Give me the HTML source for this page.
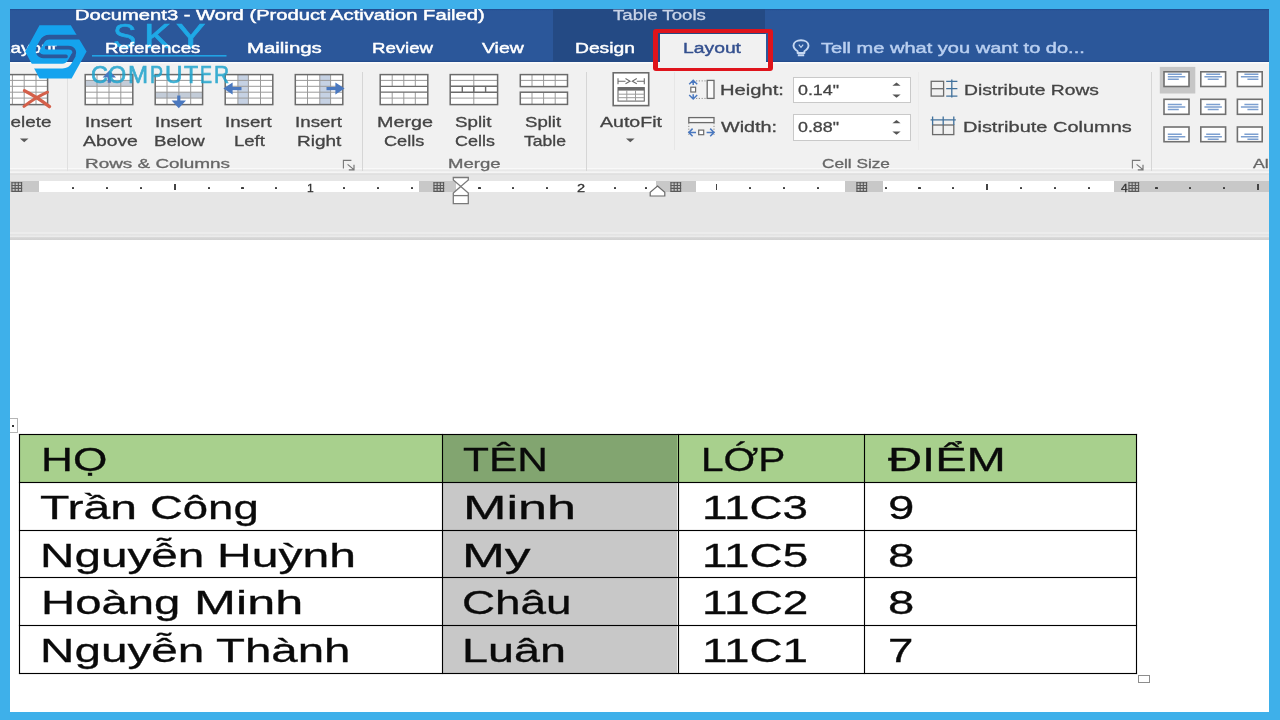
<!DOCTYPE html>
<html lang="vi"><head><meta charset="utf-8"><title>Word - Table Tools Layout</title>
<style>
html,body{margin:0;padding:0;}
body{width:1280px;height:720px;overflow:hidden;background:#3eb0ea;position:relative;font-family:'Liberation Sans',sans-serif;}
#win{position:absolute;left:0;top:0;width:1280px;height:720px;overflow:hidden;}
.a{position:absolute;}
.t{position:absolute;white-space:pre;line-height:1;transform-origin:0 0;font-family:'Liberation Sans',sans-serif;}
#titlebar{left:10px;top:9px;width:1260px;height:53px;background:linear-gradient(#214f93 0,#214f93 1px,#2b579a 1.6px,#2b579a 51.4px,#234c8d 51.8px,#234c8d 53px);}
#ctx{left:553px;top:9px;width:212px;height:53px;background:#244a84;}
#ctx2{left:553px;top:30px;width:107px;height:32px;background:#244a84;}
#seltab{left:660px;top:34px;width:106px;height:30px;background:#f1f1f1;}
#redbox{left:652.9px;top:29.3px;width:119.8px;height:41.6px;box-sizing:border-box;border:solid #df141c;border-width:4px 5.4px 3.7px 5.4px;border-radius:3px;}
#ribbon{left:10px;top:62px;width:1260px;height:113px;background:linear-gradient(#fbfbfb 0,#fbfbfb 1.2px,#f1f1f1 1.8px);}
#ribbonline{left:10px;top:167.7px;width:1260px;height:8.3px;background:linear-gradient(#f9f9f9 0,#f9f9f9 1.3px,#e8e8e8 1.6px,#e8e8e8 3.3px,#f5f5f5 3.6px,#f5f5f5 5.2px,#dddddd 5.6px,#e6e6e6 8.3px);}
#doc{left:10px;top:175px;width:1260px;height:65px;background:#e6e6e6;}
#docline{left:10px;top:232px;width:1260px;height:8px;background:linear-gradient(#ececec 0,#ececec 1.5px,#e3e3e3 1.8px,#e3e3e3 3.4px,#ebebeb 3.7px,#ebebeb 5px,#d6d6d6 5.6px,#d2d2d2 7.7px,#fff 8px);}
#page{left:10px;top:240px;width:1260px;height:472px;background:#fff;}
.sep{position:absolute;width:1px;background:#dadada;}
.fr{position:absolute;background:#3eb0ea;z-index:50;}
/* ruler */
#ruler{left:10px;top:181.2px;width:1260px;height:10.9px;background:#fff;}
.rg{position:absolute;top:180.6px;height:11.6px;background:#c8c8c8;}
.dot{position:absolute;top:186.9px;width:2.3px;height:2.3px;background:#3c3c3c;border-radius:0.6px;}
.tick{position:absolute;top:184px;width:1.5px;height:6.4px;background:#444;}
/* table */
.cell{position:absolute;}
.hl{position:absolute;height:1px;background:#000;left:19px;width:1118px;box-shadow:0 0 .9px rgba(0,0,0,.75);}
.vl{position:absolute;width:1px;background:#000;top:434px;height:240px;box-shadow:0 0 .9px rgba(0,0,0,.75);}
.inp{position:absolute;background:#fff;border:1px solid #c9c9c9;box-sizing:border-box;}
svg{position:absolute;overflow:visible;}

.op{opacity:.86;}

</style></head>
<body>
<div id="win">
<!-- title + tabs -->
<div class="a" id="titlebar"></div>
<div class="a" id="ctx"></div>
<!-- ribbon -->
<div class="a" id="ribbon"></div>
<div class="a" id="ribbonline"></div>
<div class="a" id="seltab"></div>
<div class="a" id="redbox"></div>
<!-- document area -->
<div class="a" id="doc"></div>
<div class="a" id="docline"></div>
<div class="a" id="ruler"></div>
<div class="rg" style="left:10px;width:28.5px"></div>
<div class="rg" style="left:419.4px;width:36.60000000000002px"></div>
<div class="rg" style="left:656px;width:40px"></div>
<div class="rg" style="left:845px;width:37.5px"></div>
<div class="rg" style="left:1114px;width:156px"></div>
<svg style="left:11.2px;top:181.8px" width="11.5" height="10" viewBox="0 0 11 10"><path d="M0 .7H11M0 3.5H11M0 6.4H11M0 9.3H11M.7 0V10M3.9 0V10M7.1 0V10M10.3 0V10" stroke="#5a5a5a" stroke-width="1.15" fill="none"/></svg>
<svg style="left:433px;top:181.8px" width="11.5" height="10" viewBox="0 0 11 10"><path d="M0 .7H11M0 3.5H11M0 6.4H11M0 9.3H11M.7 0V10M3.9 0V10M7.1 0V10M10.3 0V10" stroke="#5a5a5a" stroke-width="1.15" fill="none"/></svg>
<svg style="left:670px;top:181.8px" width="11.5" height="10" viewBox="0 0 11 10"><path d="M0 .7H11M0 3.5H11M0 6.4H11M0 9.3H11M.7 0V10M3.9 0V10M7.1 0V10M10.3 0V10" stroke="#5a5a5a" stroke-width="1.15" fill="none"/></svg>
<svg style="left:856px;top:181.8px" width="11.5" height="10" viewBox="0 0 11 10"><path d="M0 .7H11M0 3.5H11M0 6.4H11M0 9.3H11M.7 0V10M3.9 0V10M7.1 0V10M10.3 0V10" stroke="#5a5a5a" stroke-width="1.15" fill="none"/></svg>
<svg style="left:1128px;top:181.8px" width="11.5" height="10" viewBox="0 0 11 10"><path d="M0 .7H11M0 3.5H11M0 6.4H11M0 9.3H11M.7 0V10M3.9 0V10M7.1 0V10M10.3 0V10" stroke="#5a5a5a" stroke-width="1.15" fill="none"/></svg>
<div class="dot" style="left:72.2px"></div>
<div class="dot" style="left:106.0px"></div>
<div class="dot" style="left:139.9px"></div>
<div class="tick" style="left:174.0px"></div>
<div class="dot" style="left:207.6px"></div>
<div class="dot" style="left:241.4px"></div>
<div class="dot" style="left:275.2px"></div>
<div class="dot" style="left:343.0px"></div>
<div class="dot" style="left:376.8px"></div>
<div class="dot" style="left:410.7px"></div>
<div class="dot" style="left:478.4px"></div>
<div class="dot" style="left:512.2px"></div>
<div class="dot" style="left:546.0px"></div>
<div class="dot" style="left:613.8px"></div>
<div class="tick" style="left:715.6px"></div>
<div class="dot" style="left:749.1px"></div>
<div class="dot" style="left:783.0px"></div>
<div class="dot" style="left:816.9px"></div>
<div class="dot" style="left:884.5px"></div>
<div class="dot" style="left:918.4px"></div>
<div class="dot" style="left:952.2px"></div>
<div class="tick" style="left:986.4px"></div>
<div class="dot" style="left:1020.0px"></div>
<div class="dot" style="left:1053.8px"></div>
<div class="dot" style="left:1087.7px"></div>
<div class="dot" style="left:1155.3px"></div>
<div class="dot" style="left:1189.2px"></div>
<div class="dot" style="left:1223.0px"></div>
<div class="tick" style="left:1257.2px"></div>
<div class="dot" style="left:644.6px"></div>
<svg style="left:451.5px;top:177px" width="18" height="28" viewBox="0 0 18 28"><path d="M1.3 .5H16.3V3L8.8 9.4L1.3 3Z" fill="#fff" stroke="#7a7a7a" stroke-width="1.3"/><path d="M8.8 9.4L16.3 16V26.7H1.3V16Z" fill="#fff" stroke="#7a7a7a" stroke-width="1.3"/><path d="M1.3 18.6H16.3" stroke="#7a7a7a" stroke-width="1.3"/></svg>
<svg style="left:648.5px;top:184.5px" width="17" height="12" viewBox="0 0 17 12"><path d="M8.5 1L15.8 7.2V11H1.2V7.2Z" fill="#fff" stroke="#6a6a6a" stroke-width="1.2"/></svg>
<div class="a" id="page"></div>
<div class="cell" style="left:19.3px;top:434.6px;width:1117.2px;height:47.69999999999999px;background:#a8d08d"></div>
<div class="cell" style="left:442.5px;top:434.6px;width:234.79999999999995px;height:47.69999999999999px;background:#82a570"></div>
<div class="cell" style="left:442.5px;top:482.3px;width:234.79999999999995px;height:190.90000000000003px;background:#c8c8c8"></div>
<div class="hl" style="top:434px"></div>
<div class="hl" style="top:482px"></div>
<div class="hl" style="top:530px"></div>
<div class="hl" style="top:577px"></div>
<div class="hl" style="top:625px"></div>
<div class="hl" style="top:673px"></div>
<div class="vl" style="left:19px"></div>
<div class="vl" style="left:442px"></div>
<div class="vl" style="left:678px"></div>
<div class="vl" style="left:864px"></div>
<div class="vl" style="left:1136px"></div>
<div class="a" style="left:9px;top:418.4px;width:8.8px;height:15px;border:1px solid #b5b5b5;border-left:none;background:#fff;box-sizing:border-box"></div>
<div class="a" style="left:11.8px;top:425px;width:2px;height:2px;background:#333"></div>
<div class="a" style="left:1138px;top:674.7px;width:12px;height:8.6px;border:1px solid #8d8d8d;background:#fff;box-sizing:border-box"></div>
<div class="sep" style="left:67.3px;top:72px;height:99px;background:#e0e0e0"></div>
<div class="sep" style="left:362.2px;top:72px;height:99px;background:#d6d6d6"></div>
<div class="sep" style="left:585.9px;top:72px;height:99px;background:#d6d6d6"></div>
<div class="sep" style="left:674.3px;top:72px;height:78px;background:#e6e6e6"></div>
<div class="sep" style="left:918.3px;top:72px;height:78px;background:#ebebeb"></div>
<div class="sep" style="left:1150.9px;top:72px;height:99px;background:#d6d6d6"></div>
<div class="inp" style="left:792.6px;top:76.6px;width:118px;height:26.8px"></div>
<div class="inp" style="left:792.6px;top:113.6px;width:118px;height:27px"></div><svg style="left:0;top:0" width="1280" height="720" viewBox="0 0 1280 720"><rect x="0.5" y="74.6" width="47.10" height="30.00" fill="#fff"/><path d="M12.4 74.6V104.6M24.2 74.6V104.6M36 74.6V104.6M0.5 80.4H47.6M0.5 86.3H47.6M0.5 92.2H47.6M0.5 98.1H47.6" stroke="#9a9a9a" stroke-width="1.0" fill="none"/><rect x="0.5" y="74.6" width="47.10" height="30.00" fill="none" stroke="#6b6b6b" stroke-width="1.5"/>
<path d="M24.5 90.8C31 94 42 101 49.5 106.6" stroke="#d4604a" stroke-width="3.4" stroke-linecap="round" fill="none"/><path d="M47.5 92.2C40 95.5 31 101 24 106.4" stroke="#d4604a" stroke-width="3.0" stroke-linecap="round" fill="none"/>
<rect x="85.2" y="74.6" width="47.60" height="30.00" fill="#fff"/><rect x="85.2" y="80.4" width="47.6" height="5.9" fill="#c3ccd8"/><path d="M97 74.6V104.6M109 74.6V104.6M120.8 74.6V104.6M85.2 80.4H132.8M85.2 86.3H132.8M85.2 92.2H132.8M85.2 98.1H132.8" stroke="#9a9a9a" stroke-width="1.0" fill="none"/><rect x="85.2" y="74.6" width="47.60" height="30.00" fill="none" stroke="#6b6b6b" stroke-width="1.5"/>
<path d="M109.3 82.8V74.5" stroke="#4a78bf" stroke-width="3.2" fill="none"/><path d="M102.6 77.6L109.3 70.6L116 77.6Z" fill="#4a78bf"/>
<rect x="155.2" y="74.6" width="47.40" height="30.00" fill="#fff"/><rect x="155.2" y="92.2" width="47.4" height="5.9" fill="#c3ccd8"/><path d="M167 74.6V104.6M178.9 74.6V104.6M190.7 74.6V104.6M155.2 80.4H202.6M155.2 86.3H202.6M155.2 92.2H202.6M155.2 98.1H202.6" stroke="#9a9a9a" stroke-width="1.0" fill="none"/><rect x="155.2" y="74.6" width="47.40" height="30.00" fill="none" stroke="#6b6b6b" stroke-width="1.5"/>
<path d="M178.8 95.5V103.5" stroke="#4a78bf" stroke-width="3.2" fill="none"/><path d="M171.6 100.6L178.8 108.2L186 100.6Z" fill="#4a78bf"/>
<rect x="225.2" y="74.6" width="47.60" height="30.00" fill="#fff"/><rect x="237.9" y="74.6" width="10.5" height="30.0" fill="#c6d2e4"/><path d="M237.9 74.6V104.6M248.4 74.6V104.6M260.5 74.6V104.6M225.2 80.4H272.8M225.2 86.3H272.8M225.2 92.2H272.8M225.2 98.1H272.8" stroke="#9a9a9a" stroke-width="1.0" fill="none"/><rect x="225.2" y="74.6" width="47.60" height="30.00" fill="none" stroke="#6b6b6b" stroke-width="1.5"/>
<path d="M241.5 88.6H231" stroke="#4a78bf" stroke-width="3.2" fill="none"/><path d="M232.6 82.6L223.4 88.6L232.6 94.6Z" fill="#4a78bf"/>
<rect x="295.3" y="74.6" width="47.50" height="30.00" fill="#fff"/><rect x="319.8" y="74.6" width="10.8" height="30.0" fill="#c6d2e4"/><path d="M307.5 74.6V104.6M319.8 74.6V104.6M330.6 74.6V104.6M295.3 80.4H342.8M295.3 86.3H342.8M295.3 92.2H342.8M295.3 98.1H342.8" stroke="#9a9a9a" stroke-width="1.0" fill="none"/><rect x="295.3" y="74.6" width="47.50" height="30.00" fill="none" stroke="#6b6b6b" stroke-width="1.5"/>
<path d="M326.5 88.6H337" stroke="#4a78bf" stroke-width="3.2" fill="none"/><path d="M335.4 82.6L344.6 88.6L335.4 94.6Z" fill="#4a78bf"/>
<rect x="380.2" y="74.6" width="47.6" height="30.0" fill="#fff"/><path d="M392.2 74.6V86.3M392.2 92.2V104.6M403.8 74.6V86.3M403.8 92.2V104.6M415.3 74.6V86.3M415.3 92.2V104.6M380.2 80.4H427.8M380.2 98.1H427.8" stroke="#9a9a9a" stroke-width="1" fill="none"/><path d="M380.2 86.3H427.8M380.2 92.2H427.8" stroke="#6b6b6b" stroke-width="1.3" fill="none"/><rect x="380.2" y="74.6" width="47.6" height="30.0" fill="none" stroke="#6b6b6b" stroke-width="1.5"/>
<rect x="450.2" y="74.6" width="47.4" height="30.0" fill="#fff"/><path d="M473.8 74.6V104.6M450.2 80.4H497.6M450.2 98.1H497.6" stroke="#9a9a9a" stroke-width="1" fill="none"/><path d="M450.2 86.3H497.6M450.2 92.2H497.6M462.3 86.3V92.2M485.6 86.3V92.2M473.8 86.3V92.2" stroke="#6b6b6b" stroke-width="1.4" fill="none"/><rect x="450.2" y="74.6" width="47.4" height="30.0" fill="none" stroke="#6b6b6b" stroke-width="1.5"/>
<rect x="520.3" y="74.6" width="47.20" height="12.00" fill="#fff"/><path d="M532 74.6V86.6M543.6 74.6V86.6M555.2 74.6V86.6M520.3 80.4H567.5" stroke="#9a9a9a" stroke-width="1.0" fill="none"/><rect x="520.3" y="74.6" width="47.20" height="12.00" fill="none" stroke="#6b6b6b" stroke-width="1.5"/>
<rect x="520.3" y="92.2" width="47.20" height="12.20" fill="#fff"/><path d="M532 92.2V104.4M543.6 92.2V104.4M555.2 92.2V104.4M520.3 98.1H567.5" stroke="#9a9a9a" stroke-width="1.0" fill="none"/><rect x="520.3" y="92.2" width="47.20" height="12.20" fill="none" stroke="#6b6b6b" stroke-width="1.5"/>
<rect x="613.2" y="72.8" width="35.5" height="32.8" fill="#fff" stroke="#6b6b6b" stroke-width="1.6"/><path d="M618 78.2V84.2M644.3 78.2V84.2M618 81.2H625.5M636.8 81.2H644.3M625.5 78.6L630 81.2L625.5 83.8M636.8 78.6L632.3 81.2L636.8 83.8" stroke="#6b6b6b" stroke-width="1.1" fill="none"/><rect x="618" y="87.6" width="26.3" height="13.5" fill="#fff" stroke="#6b6b6b" stroke-width="1.1"/><rect x="618" y="87.6" width="26.3" height="3" fill="#6b6b6b"/><path d="M626.8 90V101M635.5 90V101M618 94.2H644.3M618 97.7H644.3" stroke="#9a9a9a" stroke-width="1" fill="none"/>
<path d="M19.9 138.6H28.5L24.2 142.2Z" fill="#5a5a5a"/>
<path d="M626.0 138.6H634.5999999999999L630.3 142.2Z" fill="#5a5a5a"/>
<rect x="707.2" y="80.4" width="6.8" height="18" fill="#fafafa" stroke="#6b6b6b" stroke-width="1.3"/><path d="M696 80.9H707M696 98.4H707" stroke="#8c8c8c" stroke-width="1" stroke-dasharray="1.2 1.6" fill="none"/><rect x="690.8" y="87.2" width="4.8" height="4.8" fill="#fff" stroke="#6b6b6b" stroke-width="1.2"/><path d="M689.2 84.2L693.2 80.2L697.2 84.2M693.2 80.6V85" stroke="#4a78bf" stroke-width="1.5" fill="none"/><path d="M689.2 95L693.2 99L697.2 95M693.2 98.6V94.2" stroke="#4a78bf" stroke-width="1.5" fill="none"/>
<rect x="688.8" y="117.6" width="25.2" height="5" fill="#fafafa" stroke="#6b6b6b" stroke-width="1.3"/><path d="M688.8 123V135M714 123V135" stroke="#8c8c8c" stroke-width="1" stroke-dasharray="1.2 1.6" fill="none"/><rect x="698.7" y="130.1" width="5" height="4.6" fill="#fff" stroke="#6b6b6b" stroke-width="1.2"/><path d="M692.6 128.6L688.8 132.4L692.6 136.2M689.2 132.4H696" stroke="#4a78bf" stroke-width="1.5" fill="none"/><path d="M710.2 128.6L714 132.4L710.2 136.2M713.6 132.4H706.6" stroke="#4a78bf" stroke-width="1.5" fill="none"/>
<path d="M892.4 85.8L896.5 82.6L900.6 85.8Z" fill="#555"/><path d="M892.4 94.6L896.5 97.8L900.6 94.6Z" fill="#555"/>
<path d="M892.4 123.2L896.5 120L900.6 123.2Z" fill="#555"/><path d="M892.4 131.60000000000002L896.5 134.8L900.6 131.60000000000002Z" fill="#555"/>
<rect x="931.2" y="81.3" width="12.4" height="14.8" fill="none" stroke="#6b6b6b" stroke-width="1.3"/><path d="M931.2 88.7H943.6" stroke="#6b6b6b" stroke-width="1.3"/><path d="M951.8 79.6V97.6M946.2 81.3H957.4M946.2 88.7H957.4M946.2 96.1H957.4" stroke="#41719c" stroke-width="1.3" fill="none"/>
<rect x="932.6" y="125" width="21.2" height="9.6" fill="none" stroke="#6b6b6b" stroke-width="1.3"/><path d="M943.2 125V134.6" stroke="#6b6b6b" stroke-width="1.3"/><path d="M930.6 119.8H955.8M932.6 116.6V125M943.2 116.6V125M953.8 116.6V125" stroke="#41719c" stroke-width="1.3" fill="none"/>
<path d="M351.4 160.4H343.4V168.4" stroke="#777" stroke-width="1.1" fill="none"/><path d="M347.59999999999997 164.4L353.59999999999997 169.4M354.0 164.8V169.8H348.79999999999995" stroke="#777" stroke-width="1.2" fill="none"/>
<path d="M1140.4 160.4H1132.4V168.4" stroke="#777" stroke-width="1.1" fill="none"/><path d="M1136.6000000000001 164.4L1142.6000000000001 169.4M1143.0 164.8V169.8H1137.8000000000002" stroke="#777" stroke-width="1.2" fill="none"/>
<rect x="1159.8" y="66.9" width="35.5" height="26.6" fill="#c6c6c6"/>
<rect x="1164" y="71.8" width="25.0" height="14.7" fill="#fff" stroke="#707070" stroke-width="1.6"/><path d="M1167.8 74.3h14M1167.8 76.8h17.5M1167.8 79.3h11" stroke="#7c9fd0" stroke-width="1.45" fill="none"/>
<rect x="1200.8" y="71.8" width="24.8" height="14.7" fill="#fff" stroke="#707070" stroke-width="1.6"/><path d="M1206.2 74.3h14M1204.4 76.8h17.5M1207.7 79.3h11" stroke="#7c9fd0" stroke-width="1.45" fill="none"/>
<rect x="1237.4" y="71.8" width="24.8" height="14.7" fill="#fff" stroke="#707070" stroke-width="1.6"/><path d="M1244.4 74.3h14M1240.9 76.8h17.5M1247.4 79.3h11" stroke="#7c9fd0" stroke-width="1.45" fill="none"/>
<rect x="1164" y="99.3" width="25.0" height="15.0" fill="#fff" stroke="#707070" stroke-width="1.6"/><path d="M1167.8 104.5h14M1167.8 107.0h17.5M1167.8 109.5h11" stroke="#7c9fd0" stroke-width="1.45" fill="none"/>
<rect x="1200.8" y="99.3" width="24.8" height="15.0" fill="#fff" stroke="#707070" stroke-width="1.6"/><path d="M1206.2 104.5h14M1204.4 107.0h17.5M1207.7 109.5h11" stroke="#7c9fd0" stroke-width="1.45" fill="none"/>
<rect x="1237.4" y="99.3" width="24.8" height="15.0" fill="#fff" stroke="#707070" stroke-width="1.6"/><path d="M1244.4 104.5h14M1240.9 107.0h17.5M1247.4 109.5h11" stroke="#7c9fd0" stroke-width="1.45" fill="none"/>
<rect x="1164" y="127" width="25.0" height="14.7" fill="#fff" stroke="#707070" stroke-width="1.6"/><path d="M1167.8 134.2h14M1167.8 136.7h17.5M1167.8 139.2h11" stroke="#7c9fd0" stroke-width="1.45" fill="none"/>
<rect x="1200.8" y="127" width="24.8" height="14.7" fill="#fff" stroke="#707070" stroke-width="1.6"/><path d="M1206.2 134.2h14M1204.4 136.7h17.5M1207.7 139.2h11" stroke="#7c9fd0" stroke-width="1.45" fill="none"/>
<rect x="1237.4" y="127" width="24.8" height="14.7" fill="#fff" stroke="#707070" stroke-width="1.6"/><path d="M1244.4 134.2h14M1240.9 136.7h17.5M1247.4 139.2h11" stroke="#7c9fd0" stroke-width="1.45" fill="none"/>
<path d="M797.6 51.2C794.8 49.6 793.5 47.8 793.5 45.6C793.5 42.4 796.8 40.3 801 40.3C805.2 40.3 808.5 42.4 808.5 45.6C808.5 47.8 807.2 49.6 804.4 51.2V53H797.6ZM797.8 55.3H804.2" stroke="#c6d8f2" stroke-width="1.9" fill="none" stroke-linejoin="round"/><path d="M798.8 44.6L801 47.4L803.2 44.6" stroke="#c6d8f2" stroke-width="1.1" fill="none"/></svg>
<div class="t" id="t0" style="left:112.70px;top:19.00px;font-size:34.36px;color:#1fa9e6;transform:scaleX(1.0209);-webkit-text-stroke:0.7px #1fa9e6">S</div>
<div class="t" id="t1" style="left:143.87px;top:19.00px;font-size:34.36px;color:#1fa9e6;transform:scaleX(1.1860);-webkit-text-stroke:0.7px #1fa9e6">K</div>
<div class="t" id="t2" style="left:176.41px;top:19.00px;font-size:34.36px;color:#1fa9e6;transform:scaleX(1.2887);-webkit-text-stroke:0.7px #1fa9e6">Y</div>
<div class="t op" id="t3" style="left:91.02px;top:64.00px;font-size:23.74px;color:#1ea3cc;transform:scaleX(0.9899);-webkit-text-stroke:0.7px #1ea3cc">C</div>
<div class="t op" id="t4" style="left:108.37px;top:64.00px;font-size:23.74px;color:#1ea3cc;transform:scaleX(0.9835);-webkit-text-stroke:0.7px #1ea3cc">O</div>
<div class="t op" id="t5" style="left:128.38px;top:64.00px;font-size:23.74px;color:#1ea3cc;transform:scaleX(1.0149);-webkit-text-stroke:0.7px #1ea3cc">M</div>
<div class="t op" id="t6" style="left:150.43px;top:64.00px;font-size:23.74px;color:#1ea3cc;transform:scaleX(0.8250);-webkit-text-stroke:0.7px #1ea3cc">P</div>
<div class="t op" id="t7" style="left:165.25px;top:64.00px;font-size:23.74px;color:#1ea3cc;transform:scaleX(1.0234);-webkit-text-stroke:0.7px #1ea3cc">U</div>
<div class="t op" id="t8" style="left:183.88px;top:64.00px;font-size:23.74px;color:#1ea3cc;transform:scaleX(0.9776);-webkit-text-stroke:0.7px #1ea3cc">T</div>
<div class="t op" id="t9" style="left:200.21px;top:64.00px;font-size:23.74px;color:#1ea3cc;transform:scaleX(0.7581);-webkit-text-stroke:0.7px #1ea3cc">E</div>
<div class="t op" id="t10" style="left:214.42px;top:64.00px;font-size:23.74px;color:#1ea3cc;transform:scaleX(0.8830);-webkit-text-stroke:0.7px #1ea3cc">R</div>
<div class="t" id="t11" style="left:75.41px;top:8.00px;font-size:14.39px;color:#fff;transform:scaleX(1.4025);-webkit-text-stroke:0.45px #fff">Document3 - Word (Product Activation Failed)</div>
<div class="t" id="t12" style="left:613.06px;top:8.00px;font-size:14.39px;color:#c9d4e8;transform:scaleX(1.2956);-webkit-text-stroke:0.3px #c9d4e8">Table Tools</div>
<div class="t" id="t13" style="left:-0.50px;top:40.00px;font-size:15.36px;color:#fff;transform:scaleX(1.2336);-webkit-text-stroke:0.45px #fff">Layout</div>
<div class="t" id="t14" style="left:104.64px;top:40.00px;font-size:15.36px;color:#fff;transform:scaleX(1.2140);-webkit-text-stroke:0.45px #fff">References</div>
<div class="t" id="t15" style="left:247.45px;top:40.00px;font-size:15.36px;color:#fff;transform:scaleX(1.3268);-webkit-text-stroke:0.45px #fff">Mailings</div>
<div class="t" id="t16" style="left:371.65px;top:40.00px;font-size:15.36px;color:#fff;transform:scaleX(1.2109);-webkit-text-stroke:0.45px #fff">Review</div>
<div class="t" id="t17" style="left:481.63px;top:40.00px;font-size:15.36px;color:#fff;transform:scaleX(1.2665);-webkit-text-stroke:0.45px #fff">View</div>
<div class="t" id="t18" style="left:574.59px;top:40.00px;font-size:15.36px;color:#fff;transform:scaleX(1.2539);-webkit-text-stroke:0.45px #fff">Design</div>
<div class="t" id="t19" style="left:683.00px;top:40.00px;font-size:15.36px;color:#34508f;transform:scaleX(1.2575);-webkit-text-stroke:0.4px #34508f">Layout</div>
<div class="t" id="t20" style="left:820.95px;top:40.00px;font-size:15.36px;color:#b9cff0;transform:scaleX(1.3038);-webkit-text-stroke:0.45px #b9cff0">Tell me what you want to do...</div>
<div class="t" id="t21" style="left:-3.00px;top:115.00px;font-size:14.8px;color:#444;transform:scaleX(1.2716);-webkit-text-stroke:0.3px #444">Delete</div>
<div class="t" id="t22" style="left:85.20px;top:115.00px;font-size:14.8px;color:#444;transform:scaleX(1.2679);-webkit-text-stroke:0.3px #444">Insert</div>
<div class="t" id="t23" style="left:83.22px;top:134.00px;font-size:14.8px;color:#444;transform:scaleX(1.3081);-webkit-text-stroke:0.3px #444">Above</div>
<div class="t" id="t24" style="left:155.24px;top:115.00px;font-size:14.8px;color:#444;transform:scaleX(1.2635);-webkit-text-stroke:0.3px #444">Insert</div>
<div class="t" id="t25" style="left:154.04px;top:134.00px;font-size:14.8px;color:#444;transform:scaleX(1.2611);-webkit-text-stroke:0.3px #444">Below</div>
<div class="t" id="t26" style="left:225.24px;top:115.00px;font-size:14.8px;color:#444;transform:scaleX(1.2635);-webkit-text-stroke:0.3px #444">Insert</div>
<div class="t" id="t27" style="left:234.04px;top:134.00px;font-size:14.8px;color:#444;transform:scaleX(1.2528);-webkit-text-stroke:0.3px #444">Left</div>
<div class="t" id="t28" style="left:295.20px;top:115.00px;font-size:14.8px;color:#444;transform:scaleX(1.2679);-webkit-text-stroke:0.3px #444">Insert</div>
<div class="t" id="t29" style="left:297.04px;top:134.00px;font-size:14.8px;color:#444;transform:scaleX(1.2841);-webkit-text-stroke:0.3px #444">Right</div>
<div class="t" id="t30" style="left:376.98px;top:115.00px;font-size:14.8px;color:#444;transform:scaleX(1.3335);-webkit-text-stroke:0.3px #444">Merge</div>
<div class="t" id="t31" style="left:383.69px;top:134.00px;font-size:14.8px;color:#444;transform:scaleX(1.2262);-webkit-text-stroke:0.3px #444">Cells</div>
<div class="t" id="t32" style="left:455.42px;top:115.00px;font-size:14.8px;color:#444;transform:scaleX(1.2680);-webkit-text-stroke:0.3px #444">Split</div>
<div class="t" id="t33" style="left:454.69px;top:134.00px;font-size:14.8px;color:#444;transform:scaleX(1.2120);-webkit-text-stroke:0.3px #444">Cells</div>
<div class="t" id="t34" style="left:525.45px;top:115.00px;font-size:14.8px;color:#444;transform:scaleX(1.2565);-webkit-text-stroke:0.3px #444">Split</div>
<div class="t" id="t35" style="left:524.11px;top:134.00px;font-size:14.8px;color:#444;transform:scaleX(1.1858);-webkit-text-stroke:0.3px #444">Table</div>
<div class="t" id="t36" style="left:600.22px;top:115.00px;font-size:14.8px;color:#444;transform:scaleX(1.3206);-webkit-text-stroke:0.3px #444">AutoFit</div>
<div class="t" id="t37" style="left:720.15px;top:83.00px;font-size:14.94px;color:#444;transform:scaleX(1.3502);-webkit-text-stroke:0.3px #444">Height:</div>
<div class="t" id="t38" style="left:721.24px;top:120.00px;font-size:14.94px;color:#444;transform:scaleX(1.3251);-webkit-text-stroke:0.3px #444">Width:</div>
<div class="t" id="t39" style="left:798.17px;top:83.00px;font-size:14.8px;color:#444;transform:scaleX(1.2051);-webkit-text-stroke:0.3px #444">0.14&quot;</div>
<div class="t" id="t40" style="left:798.17px;top:120.00px;font-size:14.8px;color:#444;transform:scaleX(1.2051);-webkit-text-stroke:0.3px #444">0.88&quot;</div>
<div class="t" id="t41" style="left:964.04px;top:83.00px;font-size:14.94px;color:#444;transform:scaleX(1.2904);-webkit-text-stroke:0.3px #444">Distribute Rows</div>
<div class="t" id="t42" style="left:963.42px;top:120.00px;font-size:14.94px;color:#444;transform:scaleX(1.3383);-webkit-text-stroke:0.3px #444">Distribute Columns</div>
<div class="t" id="t43" style="left:85.48px;top:158.00px;font-size:12.85px;color:#666;transform:scaleX(1.4722);-webkit-text-stroke:0.3px #666">Rows &amp; Columns</div>
<div class="t" id="t44" style="left:447.67px;top:158.00px;font-size:12.85px;color:#666;transform:scaleX(1.4429);-webkit-text-stroke:0.3px #666">Merge</div>
<div class="t" id="t45" style="left:821.74px;top:158.00px;font-size:12.85px;color:#666;transform:scaleX(1.3401);-webkit-text-stroke:0.3px #666">Cell Size</div>
<div class="t" id="t46" style="left:1253.40px;top:158.00px;font-size:12.85px;color:#666;transform:scaleX(1.3829);-webkit-text-stroke:0.3px #666">Alignment</div>
<div class="t" id="t47" style="left:307.44px;top:182.00px;font-size:11.73px;color:#333;transform:scaleX(1.0309);-webkit-text-stroke:0.3px #333">1</div>
<div class="t" id="t48" style="left:576.52px;top:182.00px;font-size:11.73px;color:#333;transform:scaleX(1.2453);-webkit-text-stroke:0.3px #333">2</div>
<div class="t" id="t49" style="left:1120.90px;top:182.00px;font-size:11.73px;color:#333;transform:scaleX(1.0273);-webkit-text-stroke:0.3px #333">4</div>
<div class="t" id="t50" style="left:41.17px;top:444.00px;font-size:32.82px;color:#0a0a0a;transform:scaleX(1.3464);-webkit-text-stroke:0.3px #0a0a0a">HỌ</div>
<div class="t" id="t51" style="left:39.94px;top:492.00px;font-size:32.82px;color:#0a0a0a;transform:scaleX(1.4651);-webkit-text-stroke:0.3px #0a0a0a">Trần</div>
<div class="t" id="t52" style="left:149.58px;top:492.00px;font-size:32.82px;color:#0a0a0a;transform:scaleX(1.3854);-webkit-text-stroke:0.3px #0a0a0a">Công</div>
<div class="t" id="t53" style="left:40.23px;top:540.00px;font-size:32.82px;color:#0a0a0a;transform:scaleX(1.4536);-webkit-text-stroke:0.3px #0a0a0a">Nguyễn</div>
<div class="t" id="t54" style="left:216.79px;top:540.00px;font-size:32.82px;color:#0a0a0a;transform:scaleX(1.4644);-webkit-text-stroke:0.3px #0a0a0a">Huỳnh</div>
<div class="t" id="t55" style="left:40.60px;top:587.00px;font-size:32.82px;color:#0a0a0a;transform:scaleX(1.4406);-webkit-text-stroke:0.3px #0a0a0a">Hoàng</div>
<div class="t" id="t56" style="left:194.25px;top:587.00px;font-size:32.82px;color:#0a0a0a;transform:scaleX(1.5344);-webkit-text-stroke:0.3px #0a0a0a">Minh</div>
<div class="t" id="t57" style="left:40.23px;top:635.00px;font-size:32.82px;color:#0a0a0a;transform:scaleX(1.4536);-webkit-text-stroke:0.3px #0a0a0a">Nguyễn</div>
<div class="t" id="t58" style="left:215.94px;top:635.00px;font-size:32.82px;color:#0a0a0a;transform:scaleX(1.4451);-webkit-text-stroke:0.3px #0a0a0a">Thành</div>
<div class="t" id="t59" style="left:463.28px;top:444.00px;font-size:32.82px;color:#0a0a0a;transform:scaleX(1.2935);-webkit-text-stroke:0.3px #0a0a0a">TÊN</div>
<div class="t" id="t60" style="left:462.76px;top:492.00px;font-size:32.82px;color:#0a0a0a;transform:scaleX(1.5900);-webkit-text-stroke:0.3px #0a0a0a">Minh</div>
<div class="t" id="t61" style="left:461.65px;top:540.00px;font-size:32.82px;color:#0a0a0a;transform:scaleX(1.5683);-webkit-text-stroke:0.3px #0a0a0a">My</div>
<div class="t" id="t62" style="left:462.02px;top:587.00px;font-size:32.82px;color:#0a0a0a;transform:scaleX(1.3971);-webkit-text-stroke:0.3px #0a0a0a">Châu</div>
<div class="t" id="t63" style="left:462.49px;top:635.00px;font-size:32.82px;color:#0a0a0a;transform:scaleX(1.4237);-webkit-text-stroke:0.3px #0a0a0a">Luân</div>
<div class="t" id="t64" style="left:701.48px;top:444.00px;font-size:32.82px;color:#0a0a0a;transform:scaleX(1.2369);-webkit-text-stroke:0.3px #0a0a0a">LỚP</div>
<div class="t" id="t65" style="left:702.35px;top:492.00px;font-size:32.82px;color:#0a0a0a;transform:scaleX(1.3954);-webkit-text-stroke:0.3px #0a0a0a">11C3</div>
<div class="t" id="t66" style="left:702.36px;top:540.00px;font-size:32.82px;color:#0a0a0a;transform:scaleX(1.3964);-webkit-text-stroke:0.3px #0a0a0a">11C5</div>
<div class="t" id="t67" style="left:702.35px;top:587.00px;font-size:32.82px;color:#0a0a0a;transform:scaleX(1.3984);-webkit-text-stroke:0.3px #0a0a0a">11C2</div>
<div class="t" id="t68" style="left:702.36px;top:635.00px;font-size:32.82px;color:#0a0a0a;transform:scaleX(1.3948);-webkit-text-stroke:0.3px #0a0a0a">11C1</div>
<div class="t" id="t69" style="left:887.87px;top:444.00px;font-size:32.82px;color:#0a0a0a;transform:scaleX(1.4373);-webkit-text-stroke:0.3px #0a0a0a">ĐIỂM</div>
<div class="t" id="t70" style="left:888.06px;top:492.00px;font-size:32.82px;color:#0a0a0a;transform:scaleX(1.4424);-webkit-text-stroke:0.3px #0a0a0a">9</div>
<div class="t" id="t71" style="left:888.10px;top:540.00px;font-size:32.82px;color:#0a0a0a;transform:scaleX(1.4408);-webkit-text-stroke:0.3px #0a0a0a">8</div>
<div class="t" id="t72" style="left:888.10px;top:587.00px;font-size:32.82px;color:#0a0a0a;transform:scaleX(1.4408);-webkit-text-stroke:0.3px #0a0a0a">8</div>
<div class="t" id="t73" style="left:887.51px;top:635.00px;font-size:32.82px;color:#0a0a0a;transform:scaleX(1.3910);-webkit-text-stroke:0.3px #0a0a0a">7</div>
<svg style="left:0;top:0;z-index:20" width="1280" height="720" viewBox="0 0 1280 720"><defs><mask id="lm" maskUnits="userSpaceOnUse" x="0" y="0" width="140" height="100"><path d="M39.5 25.3H70.8L86.6 51.6L71.6 78.4H39.5L25.2 51.6Z" fill="#fff"/><path d="M84 37.1H49.5C46 37.1 43.4 38.8 41.8 41.8L38 48.6" stroke="#000" stroke-width="4.8" fill="none"/><path d="M38.4 47.9C36 52.4 39 56.45 43.5 56.45H66" stroke="#000" stroke-width="3.7" stroke-linecap="round" fill="none"/><path d="M27.8 66.1H62.3C65.8 66.1 68.4 64.4 70 61.4L73.8 54.6" stroke="#000" stroke-width="4.8" fill="none"/><path d="M73.4 55.3C75.8 50.8 72.8 47.6 68.3 47.6H46.5" stroke="#000" stroke-width="3.7" stroke-linecap="round" fill="none"/></mask></defs><rect x="20" y="20" width="72" height="64" fill="#14a3ee" mask="url(#lm)"/><rect x="92" y="55" width="134.5" height="1.6" fill="#21a3e4"/></svg>
</div>
<div class="fr" style="left:0;top:0;width:1280px;height:9px"></div>
<div class="fr" style="left:0;top:712px;width:1280px;height:8px"></div>
<div class="fr" style="left:0;top:0;width:10.2px;height:720px"></div>
<div class="fr" style="left:1269.4px;top:0;width:10.6px;height:720px"></div>

</body></html>
